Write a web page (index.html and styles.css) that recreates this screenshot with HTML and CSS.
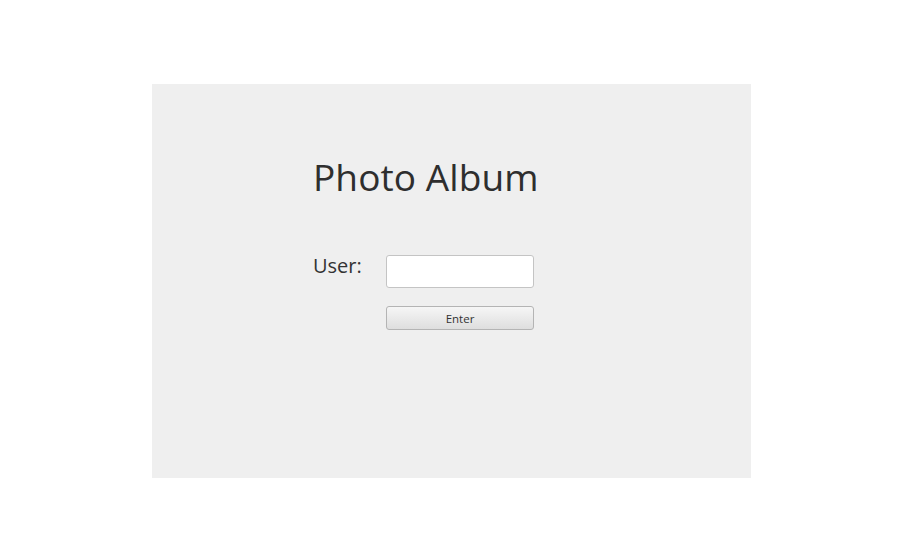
FILE: index.html
```html
<!DOCTYPE html>
<html>
<head>
<meta charset="utf-8">
<link rel="stylesheet" href="styles.css">
</head>
<body>
<div class="panel">
  <h1 class="title">Photo Album</h1>
  <div class="form">
    <label class="label" for="user">User:</label>
    <input class="input" id="user" type="text">
    <span></span>
    <button class="btn">Enter</button>
  </div>
</div>
</body>
</html>
```
FILE: styles.css
```css
html, body {
  margin: 0;
  padding: 0;
  background: #ffffff;
}
body {
  font-family: "Open Sans", "Noto Sans", sans-serif;
  color: #333333;
}
.panel {
  margin: 84px 0 0 152px;
  width: 599px;
  height: 394px;
  background: #efefef;
  box-sizing: border-box;
  padding: 0 0 0 161px;
  display: flex;
  flex-direction: column;
}
.title {
  margin: 68px 0 0 0;
  font-size: 37px;
  font-weight: 400;
  line-height: 50px;
  color: #2e2e2e;
  letter-spacing: 0.1px;
}
.form {
  margin-top: 53px;
  display: grid;
  grid-template-columns: 73px 148px;
  grid-template-rows: 33px 24px;
  row-gap: 18px;
}
.label {
  font-size: 20px;
  line-height: 22px;
  color: #333;
  align-self: start;
}
.input {
  box-sizing: border-box;
  width: 148px;
  height: 33px;
  border: 1px solid #c4c4c4;
  border-radius: 3px;
  background: #fff;
  margin: 0;
  padding: 0 6px;
  outline: none;
}
.btn {
  box-sizing: border-box;
  width: 148px;
  height: 24px;
  border: 1px solid #b4b4b4;
  border-radius: 3px;
  background: linear-gradient(#f6f6f6, #dedede);
  font-family: "Open Sans", "Noto Sans", sans-serif;
  font-size: 11.5px;
  color: #333;
  padding: 0;
  margin: 0;
}
```
